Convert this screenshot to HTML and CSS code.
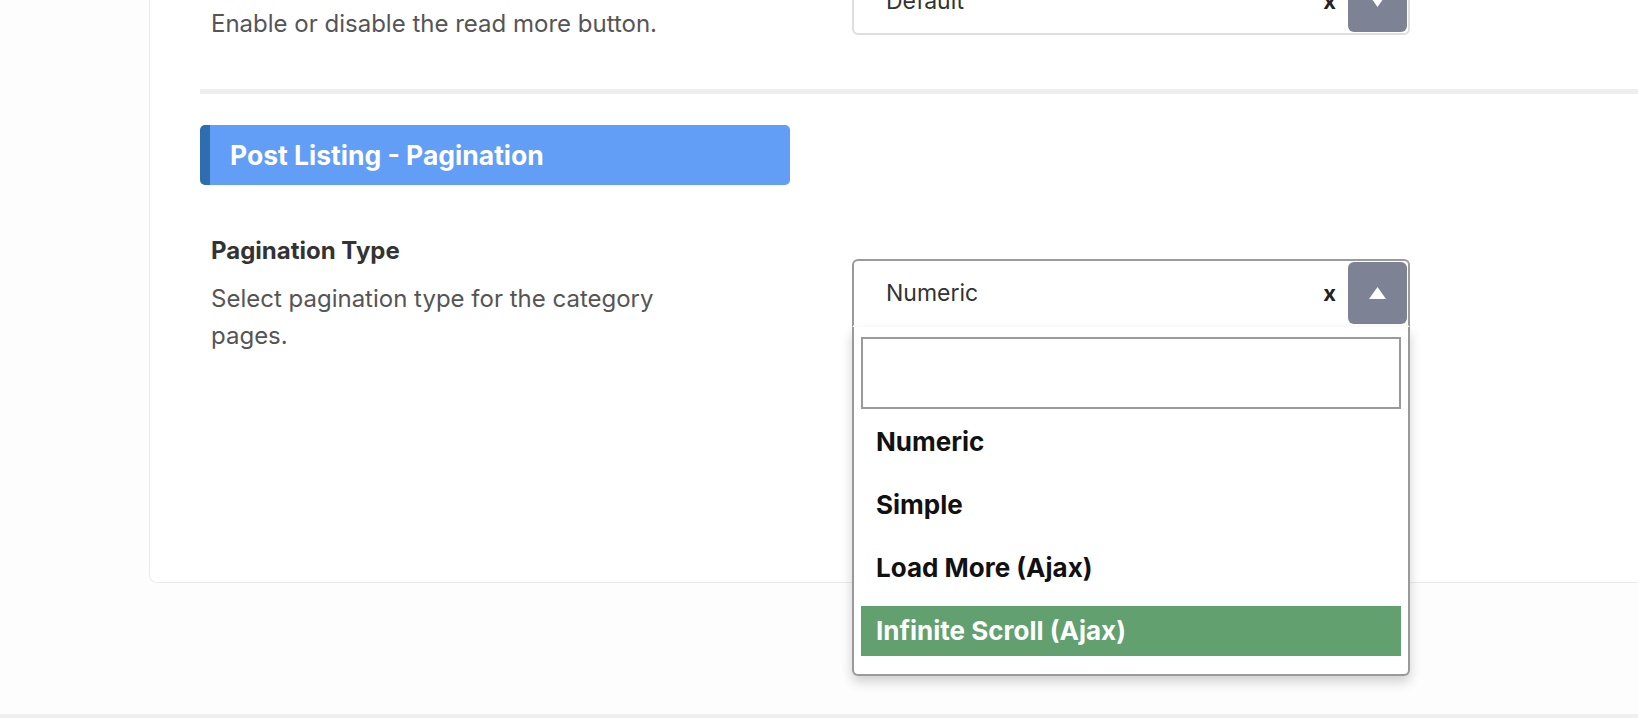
FILE: index.html
```html
<!DOCTYPE html>
<html lang="en">

<head>
    <meta charset="UTF-8" />
    <meta name="viewport" content="width=device-width, initial-scale=1" />
    <title>Theme Options - Post Listing</title>
    <link rel="stylesheet" href="styles.css">
</head>

<body>

    <div class="page">
        <div class="card">
            <!-- 더보기 버튼 -->
            <div class="field field-first">
                <div class="field-info">
                    <div class="field-desc">Enable or disable the read more button.</div>
                </div>
                <div class="select">
                    <div class="select-box">
                        <span class="select-value">Default</span>
                        <span class="select-clear">x</span>
                        <span class="select-arrow">
                            <svg width="17" height="12" viewBox="0 0 17 12"><polygon points="0,0 17,0 8.5,12" fill="#fff"/></svg>
                        </span>
                    </div>
                </div>
            </div>

            <hr class="divider">

            <div class="section-head">Post Listing - Pagination</div>

            <!-- 페이지네이션 -->
            <div class="field">
                <div class="field-info">
                    <div class="field-title">Pagination Type</div>
                    <div class="field-desc">Select pagination type for the category pages.</div>
                </div>
                <div class="select open">
                    <div class="select-box">
                        <span class="select-value">Numeric</span>
                        <span class="select-clear">x</span>
                        <span class="select-arrow">
                            <svg width="17" height="12" viewBox="0 0 17 12"><polygon points="0,12 17,12 8.5,0" fill="#fff"/></svg>
                        </span>
                    </div>
                    <div class="dropdown">
                        <input class="dropdown-search" type="text">
                        <ul class="options">
                            <li>Numeric</li>
                            <li>Simple</li>
                            <li>Load More (Ajax)</li>
                            <li class="highlighted">Infinite Scroll (Ajax)</li>
                        </ul>
                    </div>
                </div>
            </div>
        </div>

        <div class="footer-line"></div>
    </div>

</body>

</html>
```

FILE: styles.css
```css
html,
body {
    margin: 0;
    padding: 0;
    height: 100%;
    overflow: hidden;
    background: #fdfdfd;
    font-family: Inter, 'Noto Sans', Arial, sans-serif;
}
.page {
    height: 100vh;
    display: flex;
    flex-direction: column;
}
.card {
    margin: -35px 0 0 149px;
    width: 1600px;
    flex-shrink: 0;
    background: #fff;
    border: 1px solid #ebebeb;
    border-top: none;
    border-right: none;
    border-radius: 0 0 0 8px;
    padding: 0 0 228px 50px;
}
.field {
    display: flex;
    align-items: flex-start;
    margin-top: 40px;
}
.field-first { margin-top: 0; }
.field-info {
    width: 652px;
    box-sizing: border-box;
    padding-left: 11px;
    flex-shrink: 0;
}
.field-title {
    margin-top: 12px;
    font-size: 24px;
    line-height: 28px;
    font-weight: bold;
    color: #333;
}
.field-desc {
    margin-top: 15px;
    max-width: 470px;
    font-size: 24px;
    line-height: 37px;
    color: #555;
}
.field-first .field-desc { margin-top: 40px; }
/* 셀렉트 박스 */
.select {
    position: relative;
    width: 558px;
    margin-top: 34px;
}
.field-first .select { margin-top: 2px; }
.select-box {
    height: 68px;
    box-sizing: border-box;
    display: flex;
    align-items: stretch;
    padding: 1px;
    border: 2px solid #dedede;
    border-radius: 6px;
    background: #fff;
}
.select.open .select-box {
    border-color: #9a9a9a;
    border-bottom-color: #fff;
    border-radius: 6px 6px 0 0;
}
.select-value {
    flex: 1;
    display: flex;
    align-items: center;
    padding-left: 31px;
    font-size: 23px;
    color: #333;
}
.select-clear {
    display: flex;
    align-items: center;
    margin-right: 12px;
    font-size: 22px;
    font-weight: bold;
    color: #222;
}
.select-arrow {
    width: 59px;
    display: flex;
    justify-content: center;
    align-items: center;
    background: #7d8394;
    border-radius: 6px;
}
/* 드롭다운 */
.dropdown {
    position: absolute;
    top: 100%;
    left: 0;
    right: 0;
    z-index: 10;
    background: #fff;
    border: 2px solid #9a9a9a;
    border-top: none;
    border-radius: 0 0 6px 6px;
    padding: 10px 7px 18px;
    box-shadow: 0 6px 12px rgba(0, 0, 0, 0.18);
}
.dropdown-search {
    display: block;
    width: 100%;
    height: 72px;
    box-sizing: border-box;
    margin: 0;
    border: 2px solid #9a9a9a;
    border-radius: 0;
    outline: none;
}
.options {
    list-style: none;
    margin: 8px 0 0;
    padding: 0;
}
.options li {
    height: 50px;
    line-height: 50px;
    padding-left: 15px;
    margin-top: 13px;
    font-size: 26px;
    font-weight: bold;
    color: #111;
}
.options li:first-child { margin-top: 0; }
.options li.highlighted { background: #62a070; color: #fff; }
.divider {
    height: 5px;
    margin: 47px 0 0;
    border: none;
    background: #eeeeee;
}
.section-head {
    width: 590px;
    height: 60px;
    box-sizing: border-box;
    margin-top: 31px;
    padding-left: 20px;
    display: flex;
    align-items: center;
    background: #629df6;
    border-left: 10px solid #2e6db0;
    border-radius: 5px;
    font-size: 26.5px;
    font-weight: bold;
    color: #fff;
}
.footer-line {
    margin-top: auto;
    height: 4px;
    background: #f0f0f0;
}
```
